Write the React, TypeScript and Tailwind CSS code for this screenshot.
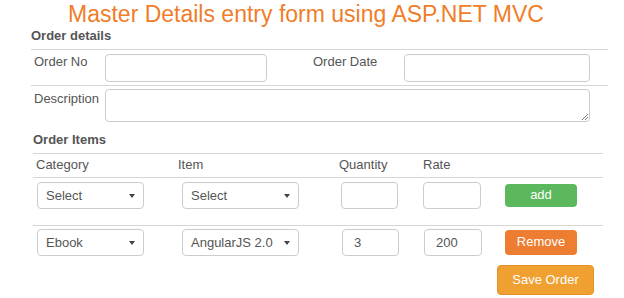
import React from "react";

function Caret() {
  return (
    <svg width="6" height="4" viewBox="0 0 6 4" className="shrink-0">
      <path d="M0 0 L6 0 L3 4 Z" fill="#444" />
    </svg>
  );
}

function FakeSelect({ value, width }: { value: string; width: string }) {
  return (
    <div
      className={`${width} h-[27px] flex items-center justify-between pl-[8px] pr-[8px] border border-[#cccccc] rounded-[4px] bg-white text-[13px] text-[#555]`}
    >
      <span>{value}</span>
      <Caret />
    </div>
  );
}

function TextBox({ value, width }: { value?: string; width: string }) {
  return (
    <div
      className={`${width} h-[27px] flex items-center pl-[11px] border border-[#cccccc] rounded-[4px] bg-white text-[13px] text-[#555]`}
    >
      {value}
    </div>
  );
}

export default function App() {
  return (
    <div className="w-[624px] h-[298px] bg-white font-['Liberation_Sans',Arial,sans-serif] text-[#555] overflow-hidden">
      {/* Titulo */}
      <div className="h-[28px] leading-[28px] pl-[68px] text-[23px] text-[#ef7d2a]">
        Master Details entry form using ASP.NET MVC
      </div>

      {/* Order details */}
      <div className="pl-[31px] w-[608px]">
        <div className="h-[22px] leading-[16px] text-[13px] font-bold border-b border-[#d6d6d6]">
          Order details
        </div>
        <div className="flex h-[36px] border-b border-[#d6d6d6] pt-[4px] text-[13px] leading-[16px]">
          <div className="w-[74px] pl-[3px]">Order No</div>
          <div className="w-[162px] h-[28px] border border-[#cccccc] rounded-[4px]" />
          <div className="w-[46px]" />
          <div className="w-[91px]">Order Date</div>
          <div className="w-[186px] h-[28px] border border-[#cccccc] rounded-[4px]" />
        </div>
        <div className="flex pt-[3px] text-[13px] leading-[16px]">
          <div className="w-[74px] pl-[3px] pt-[2px]">Description</div>
          <div className="relative w-[485px] h-[33px] border border-[#cccccc] rounded-[4px]">
            <svg width="7" height="7" viewBox="0 0 7 7" className="absolute right-[1px] bottom-[1px]">
              <path d="M7 1 L1 7 M7 4 L4 7" stroke="#777" strokeWidth="1" />
            </svg>
          </div>
        </div>
      </div>

      {/* Order Items */}
      <div className="pl-[33px] w-[603px] mt-[10px]">
        <div className="h-[22px] leading-[16px] text-[13px] font-bold border-b border-[#d6d6d6]">
          Order Items
        </div>
        <div className="flex h-[24px] pt-[3px] border-b border-[#d6d6d6] text-[13px] leading-[16px]">
          <div className="w-[144px] pl-[3px]">Category</div>
          <div className="w-[160px] pl-[1px]">Item</div>
          <div className="w-[83px] pl-[2px]">Quantity</div>
          <div className="w-[83px] pl-[3px]">Rate</div>
        </div>
        <div className="flex h-[48px] pt-[4px] border-b border-[#d6d6d6]">
          <div className="w-[144px] pl-[4px]">
            <FakeSelect value="Select" width="w-[107px]" />
          </div>
          <div className="w-[160px] pl-[5px]">
            <FakeSelect value="Select" width="w-[117px]" />
          </div>
          <div className="w-[83px] pl-[4px]">
            <TextBox width="w-[57px]" />
          </div>
          <div className="w-[83px] pl-[3px]">
            <TextBox width="w-[58px]" />
          </div>
          <div className="pl-[2px]">
            <button className="w-[72px] h-[23px] rounded-[4px] bg-[#5cb85c] text-white text-[13px] leading-[16px]">
              add
            </button>
          </div>
        </div>
        <div className="flex pt-[3px]">
          <div className="w-[144px] pl-[4px]">
            <FakeSelect value="Ebook" width="w-[107px]" />
          </div>
          <div className="w-[160px] pl-[5px]">
            <FakeSelect value="AngularJS 2.0" width="w-[117px]" />
          </div>
          <div className="w-[83px] pl-[5px]">
            <TextBox value="3" width="w-[57px]" />
          </div>
          <div className="w-[83px] pl-[4px]">
            <TextBox value="200" width="w-[58px]" />
          </div>
          <div className="pl-[2px]">
            <button className="w-[72px] h-[25px] rounded-[4px] bg-[#ed7d31] text-white text-[13px] leading-[16px]">
              Remove
            </button>
          </div>
        </div>
      </div>

      {/* Guardar */}
      <div className="flex pl-[497px] mt-[9px]">
        <button className="w-[97px] h-[30px] rounded-[4px] bg-[#f0a030] border border-[#e3922a] text-white text-[13px] leading-[16px]">
          Save Order
        </button>
      </div>
    </div>
  );
}
